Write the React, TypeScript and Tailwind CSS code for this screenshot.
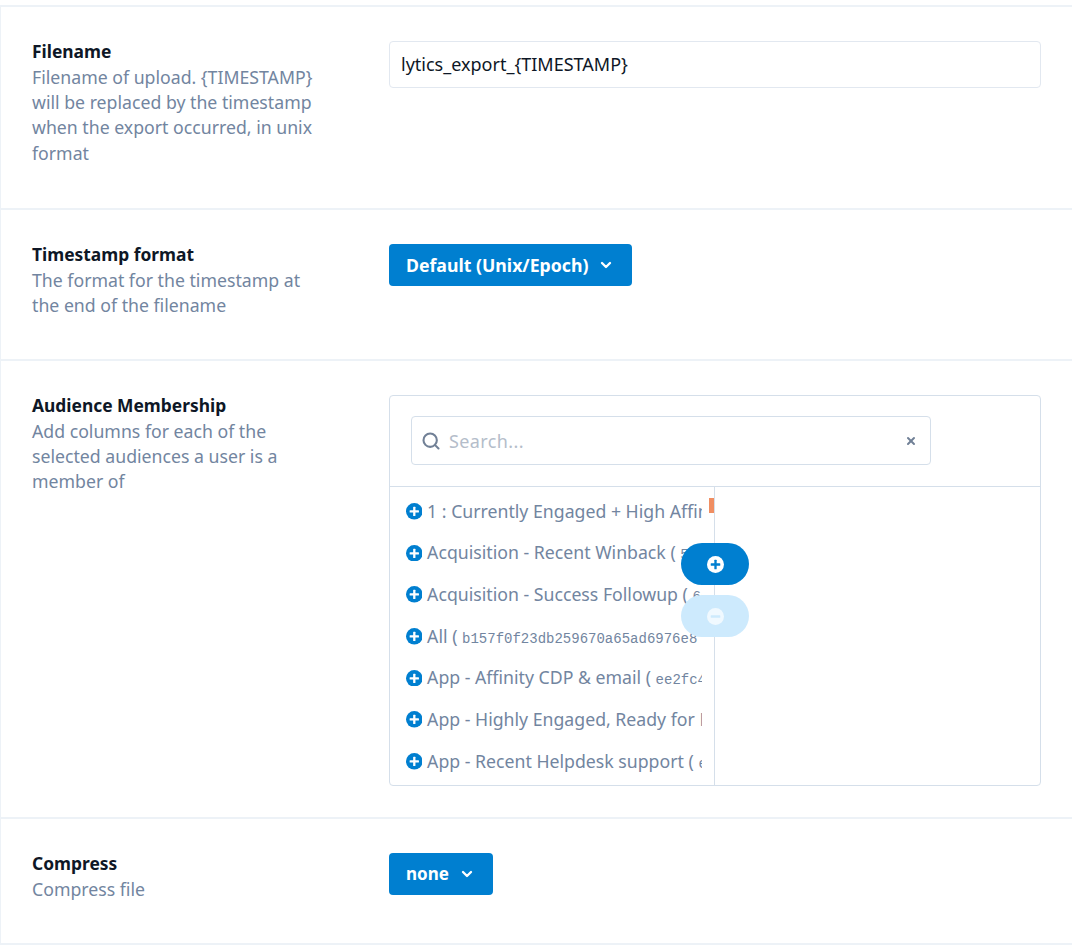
import { ChevronDown, Search, X } from "lucide-react";
import type { ReactNode } from "react";

const font = { fontFamily: '"Noto Sans", sans-serif' };

function PlusCircle({ className, minus }: { className?: string; minus?: boolean }) {
  return (
    <svg viewBox="0 0 16 16" className={className}>
      <circle cx="8" cy="8" r="8" fill="currentColor" />
      <rect x="3.5" y="6.9" width="9" height="2.2" rx="0.5" className="fill-[var(--glyph)]" />
      {!minus && <rect x="6.9" y="3.5" width="2.2" height="9" rx="0.5" className="fill-[var(--glyph)]" />}
    </svg>
  );
}

function Row({ title, desc, children, height }: { title: string; desc: ReactNode; children: ReactNode; height: string }) {
  return (
    <div className={`flex border-b-2 border-l border-[#edf2f7] pt-[34px] pl-[31px] pr-[31px] ${height}`}>
      <div className="-mt-[2px] w-[357px] shrink-0 pr-[72px]">
        <div className="mb-[1px] text-[17.4px] leading-[25px] font-bold text-[#0e1726]">{title}</div>
        <div className="text-[17.7px] leading-[25.2px] text-[#7285a0]">{desc}</div>
      </div>
      <div className="min-w-0 flex-1">{children}</div>
    </div>
  );
}

function Dropdown({ label, textSize = "text-[17.7px]" }: { label: string; textSize?: string }) {
  return (
    <button className={`flex h-[42px] items-center gap-[10px] rounded bg-[#007fd0] pr-[18px] pl-[17px] font-bold text-white ${textSize}`}>
      {label}
      <ChevronDown size={16} strokeWidth={3.5} />
    </button>
  );
}

const audiences: [string, string?][] = [
  ["1 : Currently Engaged + High Affinity"],
  ["Acquisition - Recent Winback", "5f3a9c10d2"],
  ["Acquisition - Success Followup", "6a81c0e7f4"],
  ["All", "b157f0f23db259670a65ad6976e8"],
  ["App - Affinity CDP & email", "ee2fc4a913"],
  ["App - Highly Engaged, Ready for Mobile"],
  ["App - Recent Helpdesk support", "e71ba4c052"],
];

export default function App() {
  return (
    <div className="h-[949px] overflow-hidden bg-white" style={font}>
      <div className="mt-[5px] border-b-2 border-[#edf2f7]" />
      <Row
        height="h-[203px]"
        title="Filename"
        desc="Filename of upload. {TIMESTAMP} will be replaced by the timestamp when the export occurred, in unix format"
      >
        <input
          readOnly
          value="lytics_export_{TIMESTAMP}"
          className="h-[47px] w-full rounded border border-[#e2e8f0] px-[11px] pb-[2px] text-[18px] text-[#0e1726] outline-none"
        />
      </Row>
      <Row
        height="h-[151px]"
        title="Timestamp format"
        desc="The format for the timestamp at the end of the filename"
      >
        <Dropdown label="Default (Unix/Epoch)" />
      </Row>
      <Row
        height="h-[458px]"
        title="Audience Membership"
        desc="Add columns for each of the selected audiences a user is a member of"
      >
        <div className="relative h-[391px] rounded border border-[#d5dfea]">
          <div className="h-[91px] border-b border-[#d5dfea] pt-[20px] pl-[21px]">
            <div className="flex h-[49px] w-[520px] items-center rounded border border-[#d5dfea] pr-[13px] pl-[9px]">
              <Search size={20} strokeWidth={2.5} className="text-[#718096]" />
              <span className="ml-[8px] flex-1 pt-[1px] text-[18px] tracking-[0.4px] text-[#b4bdca]">Search...</span>
              <X size={12} strokeWidth={4} className="text-[#718096]" />
            </div>
          </div>
          <div className="flex h-[298px]">
            <div className="relative w-[325px] border-r border-[#d5dfea] pt-[3.4px] pl-[15.5px]">
              <div className="absolute top-[11px] right-0 h-[15px] w-[5px] bg-[#f08e62]" />
              {audiences.map(([name, id]) => (
                <div key={name} className="flex h-[41.7px] w-[296.5px] items-center overflow-hidden whitespace-nowrap text-[17.7px] text-[#7285a0]">
                  <PlusCircle className="mr-[5px] h-[16.6px] w-[16.6px] shrink-0 text-[#007fd0] [--glyph:#ffffff]" />
                  <span>
                    {name}
                    {id && (
                      <>
                        {" ( "}
                        <code className="text-[14px]" style={{ fontFamily: '"Liberation Mono", monospace' }}>{id}</code>
                      </>
                    )}
                  </span>
                </div>
              ))}
            </div>
            <div className="flex-1" />
          </div>
          <div className="absolute top-[147px] left-[291px] flex flex-col gap-[10px]">
            <button className="flex h-[42px] w-[68px] items-center justify-center rounded-full bg-[#007fd0]">
              <PlusCircle className="h-[17px] w-[17px] text-white [--glyph:#007fd0]" />
            </button>
            <button className="flex h-[42px] w-[68px] items-center justify-center rounded-full bg-[#cdeafd]">
              <PlusCircle minus className="h-[17px] w-[17px] text-white/70 [--glyph:#cdeafd]" />
            </button>
          </div>
        </div>
      </Row>
      <Row height="h-[126px]" title="Compress" desc="Compress file">
        <Dropdown label="none" textSize="text-[17px]" />
      </Row>
    </div>
  );
}
